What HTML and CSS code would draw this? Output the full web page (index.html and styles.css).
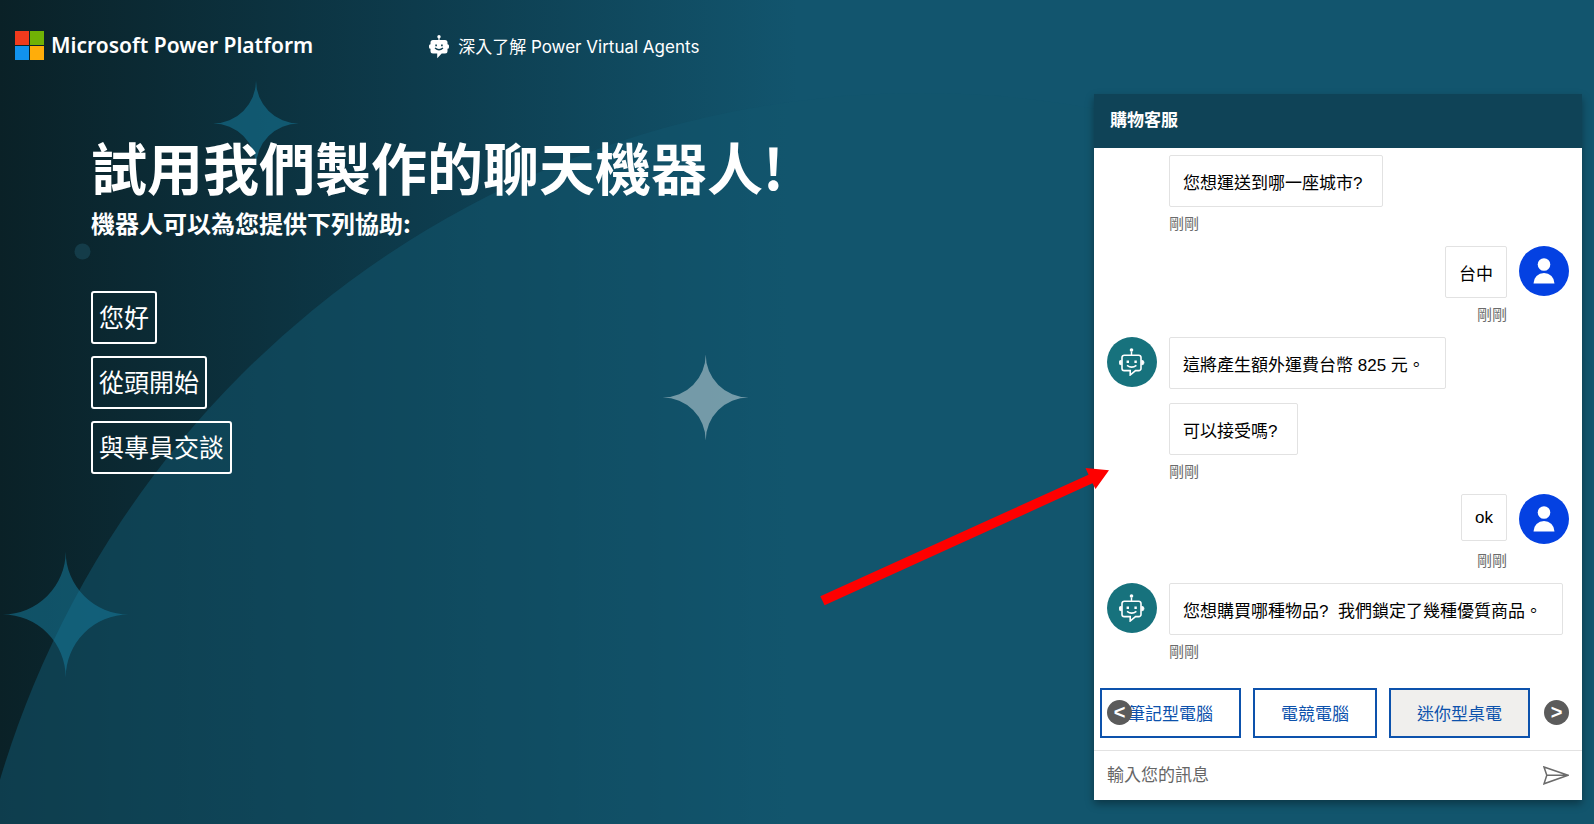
FILE: index.html
```html
<!DOCTYPE html>
<html lang="zh-Hant">
<head>
<meta charset="utf-8">
<meta name="viewport" content="width=device-width, initial-scale=1">
<title>試用我們製作的聊天機器人!</title>
<link rel="stylesheet" href="styles.css">
</head>
<body class="page">
<svg class="scenery" viewBox="0 0 1594 824" preserveAspectRatio="xMinYMin slice" aria-hidden="true">
  <circle cx="921" cy="1054" r="961" fill="#12556e" fill-opacity=".55"/>
  <path d="M256 80.500A43 43 0 0 0 299 123.500A43 43 0 0 0 256 166.500A43 43 0 0 0 213 123.500A43 43 0 0 0 256 80.500Z" fill="#167a9c" fill-opacity=".54"/>
  <path d="M65.700 551.500A63 63 0 0 0 128.700 614.500A63 63 0 0 0 65.700 677.500A63 63 0 0 0 2.700 614.500A63 63 0 0 0 65.700 551.500Z" fill="#167a9c" fill-opacity=".54"/>
  <path d="M705.700 354.500A43 43 0 0 0 748.700 397.500A43 43 0 0 0 705.700 440.500A43 43 0 0 0 662.700 397.500A43 43 0 0 0 705.700 354.500Z" fill="#fff" fill-opacity=".42"/>
  <circle cx="82.500" cy="251.500" r="8" fill="#1d5264" fill-opacity=".5"/>
</svg>

<svg class="symbols" aria-hidden="true">
  <symbol id="bot" viewBox="0 0 26 28">
    <path d="M12.500 3.500V8" stroke="#fff" stroke-width="1.500"/>
    <circle cx="12.500" cy="2" r="1.800" fill="#fff"/>
    <path d="M5.200 7.200h14.600a2.200 2.200 0 0 1 2.200 2.200v11a2.200 2.200 0 0 1-2.200 2.200h-3.300L11.200 27v-4.400h-6a2.200 2.200 0 0 1-2.200-2.200v-11a2.200 2.200 0 0 1 2.200-2.200z" fill="none" stroke="#fff" stroke-width="1.600"/>
    <path d="M2.300 12.300a2 2 0 0 0 0 4.600zM22.700 12.300a2 2 0 0 1 0 4.600z" fill="#fff" stroke="#fff" stroke-width=".8"/>
    <path d="M7.600 12.500h2.400v2.400H7.600zM15.400 12.500h2.400v2.400h-2.400z" fill="#fff"/>
    <path d="M8 17.400q4.700 3.400 9.400 0" fill="none" stroke="#fff" stroke-width="1.600"/>
  </symbol>
  <symbol id="person" viewBox="0 0 22 26">
    <circle cx="11" cy="6.500" r="6.300" fill="#fff"/>
    <path d="M.5 25.500a10.500 10.500 0 0 1 21 0z" fill="#fff"/>
  </symbol>
</svg>

<header class="topbar">
  <div class="brand">
    <svg class="brand-mark" viewBox="0 0 29 29" aria-hidden="true">
      <path fill="#f03a1d" d="M0 0h14v14H0z"/><path fill="#70b205" d="M15 0h14v14H15z"/>
      <path fill="#1192ee" d="M0 15h14v14H0z"/><path fill="#ffad0a" d="M15 15h14v14H15z"/>
    </svg>
    <span>Microsoft Power Platform</span>
  </div>
  <a class="learn" href="#">
    <svg class="learn-icon" viewBox="0 0 20 24" aria-hidden="true">
      <circle cx="10" cy="1.700" r="1.700" fill="#fff"/>
      <path d="M9.400 2h1.200v4H9.400z" fill="#fff"/>
      <path fill="#fff" fill-rule="evenodd" d="M4 5h12a2.500 2.500 0 0 1 2.500 2.500v1.700Q20 9.200 20 10.700v1.600q0 1.500-1.500 1.500V16a2.500 2.500 0 0 1-2.500 2.500h-3.300L8.200 23.200v-4.700H4A2.500 2.500 0 0 1 1.500 16v-2.200Q0 13.800 0 12.300v-1.600Q0 9.200 1.500 9.200V7.500A2.500 2.500 0 0 1 4 5zM6.300 9.400v1.900h1.600V9.400zM12.100 9.400v1.900h1.600V9.400zM5.600 13.500q4.400 4 8.800 0l-.8-.9q-3.600 2.900-7.200 0z"/>
    </svg>
    <span>深入了解 Power Virtual Agents</span>
  </a>
</header>

<div class="content">
  <main class="intro">
    <h1 class="title">試用我們製作的聊天機器人!</h1>
    <h2 class="subtitle">機器人可以為您提供下列協助:</h2>
    <div class="topics">
      <button class="topic" type="button">您好</button>
      <button class="topic" type="button">從頭開始</button>
      <button class="topic" type="button">與專員交談</button>
    </div>
  </main>

  <section class="chat" aria-label="購物客服">
    <h2 class="chat-title">購物客服</h2>
    <div class="transcript">
      <div class="message">
        <div class="row"><span class="avatar"></span><p class="bubble">您想運送到哪一座城市?</p></div>
        <time class="stamp">剛剛</time>
      </div>
      <div class="message mine">
        <div class="row"><p class="bubble">台中</p><span class="avatar user"><svg class="person-icon"><use href="#person"/></svg></span></div>
        <time class="stamp">剛剛</time>
      </div>
      <div class="message">
        <div class="row"><span class="avatar bot"><svg class="bot-icon"><use href="#bot"/></svg></span><p class="bubble">這將產生額外運費台幣 825 元。</p></div>
        <div class="row"><span class="avatar"></span><p class="bubble">可以接受嗎?</p></div>
        <time class="stamp">剛剛</time>
      </div>
      <div class="message mine">
        <div class="row"><p class="bubble">ok</p><span class="avatar user"><svg class="person-icon"><use href="#person"/></svg></span></div>
        <time class="stamp">剛剛</time>
      </div>
      <div class="message">
        <div class="row"><span class="avatar bot"><svg class="bot-icon"><use href="#bot"/></svg></span><p class="bubble">您想購買哪種物品?&nbsp; 我們鎖定了幾種優質商品。</p></div>
        <time class="stamp">剛剛</time>
      </div>
    </div>
    <div class="actions">
      <button class="action" type="button">筆記型電腦</button>
      <button class="action" type="button">電競電腦</button>
      <button class="action hovered" type="button">迷你型桌電</button>
      <button class="flip prev" type="button" aria-label="上一個">&lt;</button>
      <button class="flip next" type="button" aria-label="下一個">&gt;</button>
    </div>
    <form class="composer">
      <input class="composer-input" type="text" aria-label="輸入您的訊息" placeholder="輸入您的訊息">
      <button class="send" type="button" aria-label="傳送">
        <svg class="send-icon" viewBox="0 0 26 19" aria-hidden="true">
          <path d="M1 1 25 9.300 1 17.800 3.800 9.300zM3.800 9.300H25" fill="none" stroke="#6b6b6b" stroke-width="1.500"/>
        </svg>
      </button>
    </form>
  </section>
</div>

<svg class="pointer" viewBox="0 0 1594 824" preserveAspectRatio="xMinYMin slice" aria-hidden="true">
  <path fill="#fe0000" d="M820.300 596.200 1088.500 474.700 1085.500 468 1109 470.300 1095.500 489 1092.500 483.300 824.600 605.300z"/>
</svg>
</body>
</html>
```

FILE: styles.css
```css
* {
  box-sizing: border-box;
}

.page {
  position: relative;
  display: flex;
  flex-direction: column;
  min-height: 100vh;
  margin: 0;
  overflow: hidden;
  background: linear-gradient(90deg, #0a2127 0%, #0d3b4c 26%, #12556e 50%);
  color: #fff;
  font-family: "Liberation Sans", "Noto Sans CJK TC", sans-serif;
}

button,
input {
  font: inherit;
  color: inherit;
}

.scenery,
.pointer {
  position: absolute;
  inset: 0;
  width: 100%;
  height: 100%;
  pointer-events: none;
}

.symbols {
  position: absolute;
  width: 0;
  height: 0;
}

.topbar {
  position: relative;
  display: flex;
  align-items: flex-start;
  gap: 116px;
  height: 94px;
  padding: 30px 15px 0;
}

.brand {
  display: flex;
  align-items: center;
  gap: 7px;
  font: 600 21px/30px "Noto Sans", sans-serif;
}

.brand-mark {
  width: 29px;
  height: 29px;
}

.learn {
  display: flex;
  align-items: center;
  gap: 9px;
  padding-top: 4px;
  color: #fff;
  font: 17px/26px Inter, "Noto Sans CJK TC", sans-serif;
  text-decoration: none;
}

.learn-icon {
  width: 20px;
  height: 24px;
}

.content {
  position: relative;
  display: flex;
  flex: 1;
  justify-content: space-between;
  gap: 24px;
  padding: 0 12px 24px 91px;
}

.intro {
  padding-top: 38px;
}

.title {
  margin: 0;
  font: bold 56px/68px "Noto Sans CJK TC", sans-serif;
}

.subtitle {
  margin: 5px 0 0;
  font: bold 24px/36px "Noto Sans CJK TC", sans-serif;
}

.topics {
  display: flex;
  flex-direction: column;
  align-items: flex-start;
  gap: 12px;
  margin-top: 50px;
}

.topic {
  height: 53px;
  padding: 0 6px 4px;
  border: 2px solid #fff;
  border-radius: 3px;
  background: none;
  font-size: 25px;
}

.chat {
  display: flex;
  flex-direction: column;
  width: 488px;
  background: #fff;
  color: #000;
  box-shadow: 0 4px 8px rgba(0, 0, 0, .35);
}

.chat-title {
  margin: 0;
  padding: 0 16px;
  background: #0f4357;
  color: #fff;
  font-size: 17px;
  line-height: 54px;
}

.transcript {
  display: flex;
  flex: 1;
  flex-direction: column;
  gap: 12px;
  padding: 7px 13px 0;
}

.message {
  display: flex;
  flex-direction: column;
}

.row {
  display: flex;
  gap: 12px;
  min-height: 50px;
  align-items: flex-start;
}

.row + .row {
  margin-top: 14px;
}

.avatar {
  display: flex;
  flex: none;
  align-items: center;
  justify-content: center;
  width: 50px;
  border-radius: 50%;
}

.avatar.bot {
  height: 50px;
  background: #17727d;
}

.avatar.user {
  height: 50px;
  background: #0441e2;
}

.bot-icon {
  width: 26px;
  height: 28px;
}

.person-icon {
  width: 22px;
  height: 26px;
}

.bubble {
  margin: 0;
  padding: 13px 20px 12px 13px;
  border: 1px solid #e2e2e2;
  border-radius: 2px;
  font-size: 17px;
  white-space: nowrap;
}

.stamp {
  margin: 7px 62px 0;
  color: #6b6b6b;
  font-size: 15px;
  line-height: 20px;
}

.mine .row {
  justify-content: flex-end;
}

.mine .bubble {
  padding-right: 13px;
}

.mine .stamp {
  text-align: right;
}

.actions {
  position: relative;
  display: flex;
  gap: 12px;
  padding: 0 6px 12px;
}

.action {
  height: 50px;
  padding: 0 26px 2px;
  border: 2px solid #0d52ac;
  background: #fff;
  color: #0d52ac;
  font-size: 17px;
  white-space: nowrap;
}

.action.hovered {
  background: #f0efed;
}

.flip {
  position: absolute;
  top: 12px;
  width: 25px;
  height: 25px;
  padding: 0;
  border: 0;
  border-radius: 50%;
  background: #5b5b5b;
  color: #fff;
  font-size: 20px;
  font-weight: bold;
  line-height: 25px;
}

.prev {
  left: 13px;
}

.next {
  right: 13px;
}

.composer {
  display: flex;
  align-items: center;
  height: 50px;
  padding: 0 13px;
  border-top: 1px solid #e2e2e2;
}

.composer-input {
  flex: 1;
  min-width: 0;
  padding: 0;
  border: 0;
  outline: 0;
  background: none;
  font-size: 17px;
}

.composer-input::placeholder {
  color: #666;
}

.send {
  display: flex;
  padding: 0;
  border: 0;
  background: none;
}

.send-icon {
  width: 26px;
  height: 19px;
}
```
